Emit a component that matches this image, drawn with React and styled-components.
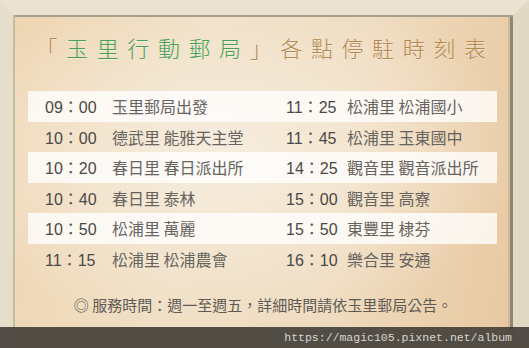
import React from 'react'
import styled, { createGlobalStyle } from 'styled-components'

const GlobalStyle = createGlobalStyle`
  html, body {
    margin: 0;
    padding: 0;
  }
  body {
    width: 529px;
    height: 348px;
    overflow: hidden;
    background: #e9dfcc;
  }
`

const Screen = styled.div`
  position: relative;
  width: 529px;
  height: 348px;
`

const Page = styled.div`
  width: 529px;
  height: 348px;
  box-sizing: border-box;
  border-style: solid;
  border-width: 15px 16px 18px 13px;
  border-color: #ebe3d1 #e2d9c5 #d8cdb6 #e6ddca;
  background: #ede0c8;
  overflow: hidden;
`

const Panel = styled.div`
  height: 100%;
  box-sizing: border-box;
  background:
    radial-gradient(ellipse 60% 55% at 42% 45%, rgba(247, 238, 224, 0.95) 0%, rgba(247, 238, 224, 0) 100%),
    linear-gradient(100deg, #eed5b2 0%, #f0dfc4 35%, #efdcc0 65%, #e8c8a0 100%);
  box-shadow:
    inset 2px 0 0 #c9bba0,
    inset 0 2px 0 #a9a08c,
    inset -3px 0 0 #8f8674,
    inset -5px 0 0 rgba(190, 175, 150, 0.6);
  display: flex;
  flex-direction: column;
  align-items: stretch;
`

const Title = styled.h1`
  margin: 17px 0 0;
  height: 30px;
  line-height: 30px;
  text-align: center;
  font-family: "Noto Sans CJK TC", "Noto Sans CJK SC", sans-serif;
  font-weight: 300;
  font-size: 22px;
  letter-spacing: 8.6px;
  padding-left: 4px;
  white-space: nowrap;
  color: #b4884f;
  text-shadow: 0 1px 0 rgba(255, 255, 255, 0.35);
`

const Green = styled.span`
  color: #48a055;
`

const Schedule = styled.div`
  margin: 29px 16px 0 15px;
  display: flex;
  flex-direction: column;
`

const Row = styled.div`
  display: grid;
  grid-template-columns: 67px 174px 61px 1fr;
  align-items: center;
  height: 30.5px;
  padding-left: 17px;
  background: ${p => (p.$striped ? 'rgba(255, 255, 255, 0.78)' : 'transparent')};
`

const Time = styled.span`
  font-family: "Liberation Sans", Arial, "Noto Sans CJK TC", sans-serif;
  font-size: 16px;
  color: #4a4844;
  white-space: nowrap;
`

const Colon = styled.span`
  font-family: "Noto Sans CJK TC", sans-serif;
  color: #55524d;
`

const Stop = styled.span`
  font-family: "Noto Sans CJK TC", "Noto Sans CJK SC", sans-serif;
  font-size: 16px;
  color: #67645f;
  white-space: nowrap;
`

const Footer = styled.p`
  margin: 21px 0 0;
  height: 20px;
  line-height: 20px;
  text-align: center;
  font-family: "Noto Sans CJK TC", "Noto Sans CJK SC", sans-serif;
  font-size: 15px;
  color: #5e5b56;
  white-space: nowrap;
`

const Watermark = styled.div`
  position: absolute;
  left: 0;
  right: 0;
  bottom: 0;
  height: 21px;
  display: flex;
  align-items: center;
  justify-content: flex-end;
  padding-right: 17px;
  background: rgba(62, 58, 52, 0.88);
  font-family: "Liberation Mono", "DejaVu Sans Mono", monospace;
  font-size: 11.5px;
  color: #d9d6d0;
`

const rows = [
  ['09', '00', '玉里郵局出發', '11', '25', '松浦里 松浦國小'],
  ['10', '00', '德武里 能雅天主堂', '11', '45', '松浦里 玉東國中'],
  ['10', '20', '春日里 春日派出所', '14', '25', '觀音里 觀音派出所'],
  ['10', '40', '春日里 泰林', '15', '00', '觀音里 高寮'],
  ['10', '50', '松浦里 萬麗', '15', '50', '東豐里 棣芬'],
  ['11', '15', '松浦里 松浦農會', '16', '10', '樂合里 安通'],
]

const Clock = ({ h, m }) => (
  <Time>{h}<Colon>：</Colon>{m}</Time>
)

const App = () => {
  return (
    <Screen>
      <GlobalStyle />
      <Page>
        <Panel>
          <Title>
            「<Green>玉里行動郵局</Green>」各點停駐時刻表
          </Title>
          <Schedule>
            {rows.map((r, i) => (
              <Row key={i} $striped={i % 2 === 0}>
                <Clock h={r[0]} m={r[1]} />
                <Stop>{r[2]}</Stop>
                <Clock h={r[3]} m={r[4]} />
                <Stop>{r[5]}</Stop>
              </Row>
            ))}
          </Schedule>
          <Footer>◎ 服務時間：週一至週五，詳細時間請依玉里郵局公告。</Footer>
        </Panel>
      </Page>
      <Watermark>https://magic105.pixnet.net/album</Watermark>
    </Screen>
  )
}

export default App
